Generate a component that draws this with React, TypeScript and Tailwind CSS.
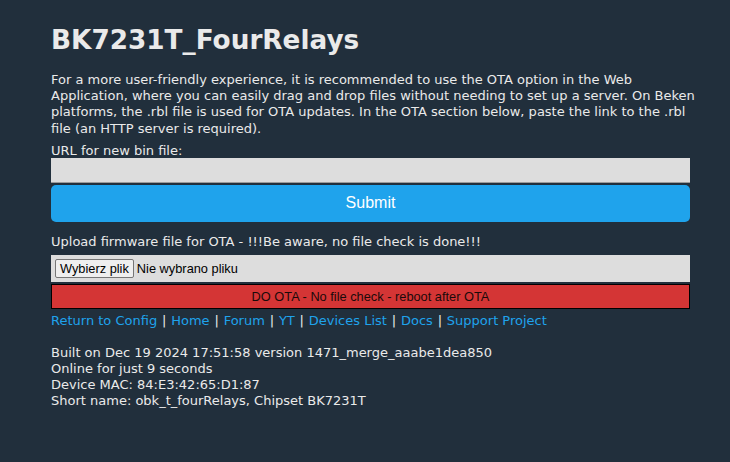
import React from 'react';

const links = ['Return to Config', 'Home', 'Forum', 'YT', 'Devices List', 'Docs', 'Support Project'];

const App: React.FC = () => {
  return (
    <div className="min-h-[462px] w-full bg-[#212f3c] text-[#eaeaea] font-['DejaVu_Sans',Verdana,sans-serif]">
      <div className="ml-[51px] w-[639px] pt-[24px]">
        <h1 className="text-[26.3px] font-bold leading-[32px] text-[#eaeaea]">BK7231T_FourRelays</h1>

        <p className="mt-[16px] w-[650px] text-[13px] leading-[16.2px]">
          For a more user-friendly experience, it is recommended to use the OTA option in the Web Application, where you
          can easily drag and drop files without needing to set up a server. On Beken platforms, the .rbl file is used for
          OTA updates. In the OTA section below, paste the link to the .rbl file (an HTTP server is required).
        </p>

        {/* URL form */}
        <div className="mt-[6px] text-[13px] leading-[16px]">URL for new bin file:</div>
        <input
          type="text"
          className="mt-[-1px] block h-[25px] w-full border-b border-[#9a9a9a] bg-[#dddddd] px-2 text-[13px] text-black outline-none"
        />
        <button className="mt-[2px] block h-[37px] w-full rounded-[5px] bg-[#1fa3ec] font-['Liberation_Sans',Arial,sans-serif] text-[16px] text-white">
          Submit
        </button>

        {/* OTA upload */}
        <div className="mt-[12px] text-[13px] leading-[16px]">Upload firmware file for OTA - !!!Be aware, no file check is done!!!</div>
        <div className="mt-[5px] flex h-[27px] w-full items-center bg-[#dddddd] px-[4px] font-['Liberation_Sans',Arial,sans-serif] text-[12.8px] text-black">
          <span className="flex h-[19px] items-center rounded-[2px] border border-[#767676] bg-[#efefef] px-[4px]">Wybierz plik</span>
          <span className="ml-[3px]">Nie wybrano pliku</span>
        </div>
        <button className="mt-[2px] block h-[25px] w-full border border-black bg-[#d43535] font-['Liberation_Sans',Arial,sans-serif] text-[12.8px] text-[#1a0a0a]">
          DO OTA - No file check - reboot after OTA
        </button>

        {/* Nav links */}
        <div className="mt-[4px] text-[13px] leading-[16px]">
          {links.map((l, i) => (
            <React.Fragment key={l}>
              {i > 0 && <span className="mx-[0.7px] text-[#eaeaea]"> | </span>}
              <a href="#" className="text-[#1fa3ec]">{l}</a>
            </React.Fragment>
          ))}
        </div>

        {/* Build info */}
        <div className="mt-[16px] text-[13px] leading-[16px]">
          <div>Built on Dec 19 2024 17:51:58 version 1471_merge_aaabe1dea850</div>
          <div>Online for just 9 seconds</div>
          <div>Device MAC: 84:E3:42:65:D1:87</div>
          <div>Short name: obk_t_fourRelays, Chipset BK7231T</div>
        </div>
      </div>
    </div>
  );
};

export default App;
